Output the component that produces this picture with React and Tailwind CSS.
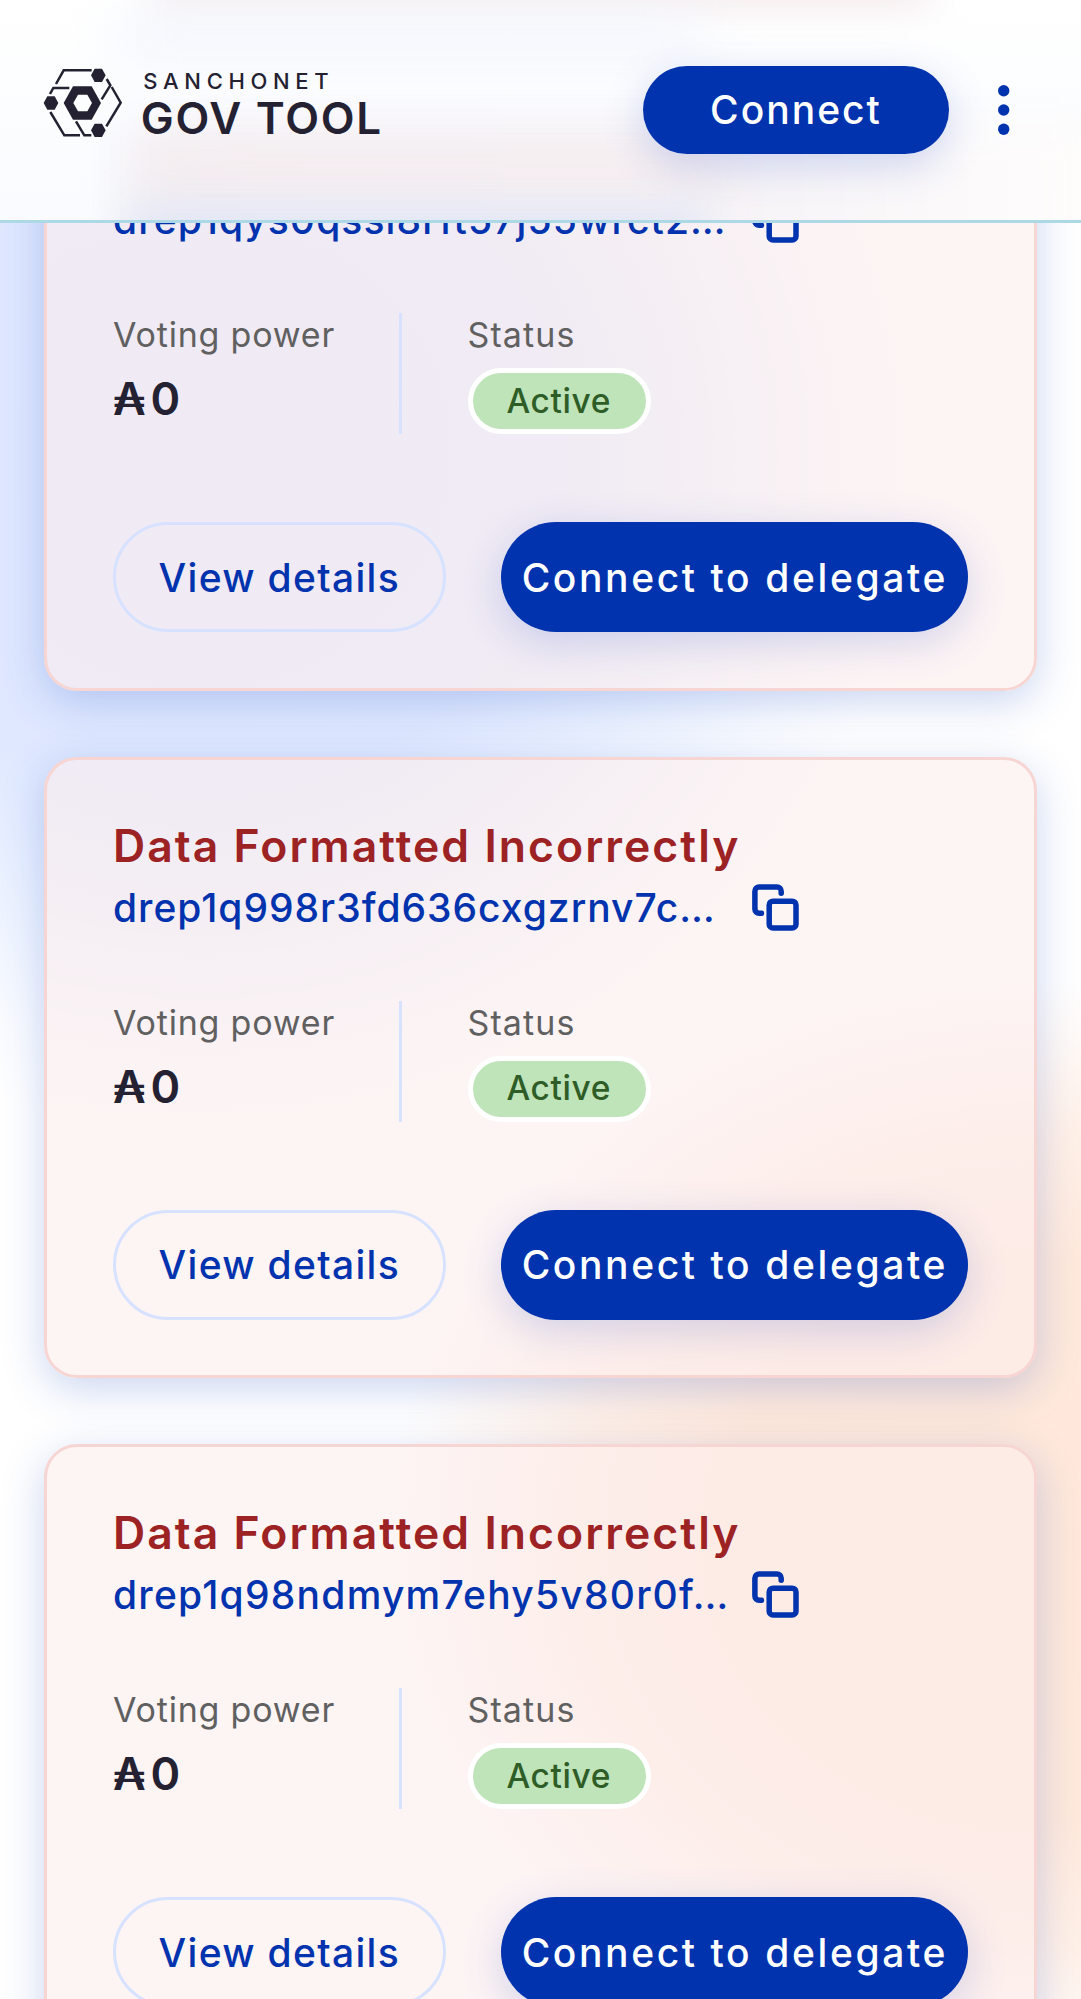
import React from 'react';

const dreps = [
  { id: 'drep1q998r3fd636cxgzrnv7c…', tracking: 'tracking-[1px]' },
  { id: 'drep1q98ndmym7ehy5v80r0f…', tracking: 'tracking-[1.25px]' },
];

function LogoMark() {
  return (
    <svg className="relative mt-[2.3px] h-[70px] w-[80px] shrink-0" viewBox="40 55 240 210" fill="none" stroke="#242232" strokeWidth="7.5">
      <path d="M186 62H102L79 103" />
      <path d="M119 115H71L61 133" />
      <path d="M62 187L104 257H151" />
      <path d="M139 215L164 257H185" />
      <path d="M231 88L242 107L216 149" />
      <path d="M246 112L273 159L230 230" />
      <path fill="#242232" stroke="none" d="M195 57H217L228 77L217 97H195L184 77Z" />
      <path fill="#242232" stroke="none" d="M53 140H75L86 160L75 180H53L42 160Z" />
      <path fill="#242232" stroke="none" d="M195 222H217L228 242L217 262H195L184 242Z" />
      <path
        fill="#242232"
        stroke="none"
        fillRule="evenodd"
        d="M130 110H186L214 160L186 210H130L102 160ZM145 135L131 160L145 185H173L187 160L173 135Z"
      />
    </svg>
  );
}

function CopyIcon() {
  return (
    <svg className="h-[48px] w-[49px] shrink-0" viewBox="0 0 49 48" fill="none" stroke="#0033ad" strokeWidth="5.5" strokeLinecap="round" strokeLinejoin="round">
      <rect x="18.2" y="17.2" width="26.8" height="26.8" rx="3.8" />
      <path d="M10.5 29.3H8.1a4.2 4.2 0 0 1-4.2-4.2V7.2A4.2 4.2 0 0 1 8.1 3H26a4.2 4.2 0 0 1 4.2 4.2V9.2" />
    </svg>
  );
}

function Card({ title, id, tracking }) {
  return (
    <article className="h-[621.5px] shrink-0 rounded-[33px] border-[3px] border-[#f6d5d2] bg-[#fcecec]/60 px-[66px] pt-[52.9px] shadow-[0_11px_41px_rgba(47,90,200,0.25)]">
      <div className="h-[66px]">
        {title && (
          <h2 className="whitespace-nowrap text-[44.5px] font-semibold leading-[66px] tracking-[2.04px] text-[#9c2224]">{title}</h2>
        )}
      </div>
      <div className="flex h-[58px] items-center text-[#0033ad]">
        <span className={`w-[637.5px] whitespace-nowrap text-[39px] font-medium leading-[58px] ${tracking}`}>{id}</span>
        <CopyIcon />
      </div>
      <div className="mt-[64px] flex h-[121px]">
        <div className="w-[285.5px]">
          <p className="whitespace-nowrap pt-px text-[34px] leading-[42px] tracking-[0.8px] text-[#606060]">Voting power</p>
          <p className="mt-[10px] text-[45px] font-semibold leading-[66px] text-[#242232]">
            <span className="inline-block w-[37.5px]">₳</span>0
          </p>
        </div>
        <div className="w-[3px] bg-[#d6e2ff]" />
        <div className="ml-[66px]">
          <p className="pt-px text-[34px] leading-[42px] tracking-[1.1px] text-[#606060]">Status</p>
          <div className="mt-[12px] flex h-[66px] w-[183.5px] items-center justify-center rounded-full border-[5.5px] border-white bg-[#c0e4ba] pr-px text-[33.5px] font-medium tracking-[0.6px] text-[#2e5d27]">
            Active
          </div>
        </div>
      </div>
      <div className="mt-[88px] flex h-[110px] gap-[55px] text-[39px] font-medium">
        <button className="w-[333px] whitespace-nowrap rounded-full border-[3px] border-[#d6e2ff] pt-[2px] tracking-[1.3px] text-[#0033ad]">
          View details
        </button>
        <button className="w-[468px] whitespace-nowrap rounded-full bg-[#0033ad] pl-px pt-[2px] tracking-[2.6px] text-white shadow-[0_11px_41px_rgba(47,82,200,0.2)]">
          Connect to delegate
        </button>
      </div>
    </article>
  );
}

export default function App() {
  return (
    <div className="relative flex h-[1999px] w-[1081px] flex-col overflow-hidden bg-white font-['Inter','Noto_Sans',sans-serif]">
      <div className="absolute -left-[520px] -top-[220px] h-[1350px] w-[1440px] bg-[radial-gradient(closest-side,#dee7ff_0%,#dfe8ff_50%,#eaf1ff_68%,#f9fbff_88%,#ffffff_100%)]" />
      <div className="absolute left-[390px] top-[980px] h-[1120px] w-[1300px] bg-[radial-gradient(closest-side,#ffe8da_0%,#ffe9dc_50%,#fff0e7_72%,#fffaf7_90%,#ffffff00_100%)]" />

      <header className="relative z-10 flex h-[223px] shrink-0 items-start overflow-hidden border-b-[3px] border-[#add8e6] bg-white pl-[43.3px] pt-[66px]">
        <div className="absolute inset-0 bg-linear-to-b from-white to-[#f9fbfe]" />
        <div className="absolute -top-[28px] left-[150px] h-[34px] w-[780px] bg-[#f3e8ea] blur-[18px]" />
        <div className="absolute left-[120px] top-[14px] h-[44px] w-[580px] bg-[#f2f5fd] blur-[26px]" />
        <div className="absolute left-[130px] top-[128px] h-[150px] w-[980px] bg-linear-to-r from-[#f2eff5] via-[#f4f1f6] to-[#fffdfc] blur-[24px]" />
        <div className="absolute left-[140px] top-[148px] h-[34px] w-[580px] bg-[#f6ebec] blur-[24px]" />
        <div className="absolute left-[125px] top-[208px] h-[40px] w-[580px] bg-[#e0e6f5] blur-[18px]" />
        <LogoMark />
        <div className="relative ml-[17.5px] text-[#242232]">
          <p className="pl-[2.5px] pt-px text-[22px] font-medium leading-[28px] tracking-[5.67px]">SANCHONET</p>
          <p className="mt-[-2.5px] whitespace-nowrap text-[44px] font-semibold leading-[50px] tracking-[1.7px]">GOV TOOL</p>
        </div>
        <button className="absolute left-[643px] top-[66px] h-[88px] w-[306px] rounded-full bg-[#0033ad] pt-px text-[39px] font-medium tracking-[2px] text-white shadow-[0_11px_41px_rgba(47,82,200,0.22)]">
          Connect
        </button>
        <svg className="absolute left-[997px] top-[84px] h-[52px] w-[14px]" viewBox="0 0 14 52" fill="#0033ad">
          <circle cx="6.7" cy="6.8" r="5.7" />
          <circle cx="6.7" cy="26" r="5.7" />
          <circle cx="6.7" cy="45.3" r="5.7" />
        </svg>
      </header>

      <main className="relative flex h-[1776px] flex-col justify-start gap-[66px] overflow-hidden px-[44px]">
        <div className="-mt-[153.9px]">
          <Card id="drep1qys0qssl8rft57j55wrct2…" tracking="tracking-[1.12px]" />
        </div>
        {dreps.map((d) => (
          <Card key={d.id} title="Data Formatted Incorrectly" {...d} />
        ))}
      </main>
    </div>
  );
}
